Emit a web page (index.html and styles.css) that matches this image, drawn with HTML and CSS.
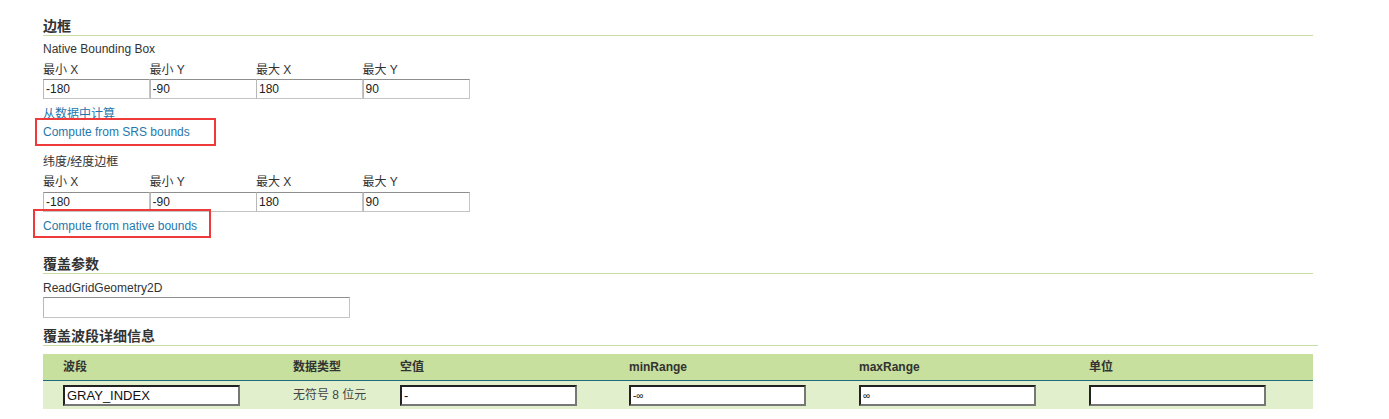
FILE: index.html
```html
<!DOCTYPE html>
<html lang="zh">
<head>
<meta charset="utf-8">
<title>边框</title>
<link rel="stylesheet" href="styles.css">
</head>
<body>
<div class="page">
  <h3 class="section section-first">边框</h3>
  <div class="sub sub-native">Native Bounding Box</div>
  <div class="bbox">
    <span class="bbox-label">最小 X</span>
    <span class="bbox-label">最小 Y</span>
    <span class="bbox-label">最大 X</span>
    <span class="bbox-label">最大 Y</span>
    <input class="bbox-input" type="text" value="-180">
    <input class="bbox-input" type="text" value="-90">
    <input class="bbox-input" type="text" value="180">
    <input class="bbox-input" type="text" value="90">
  </div>
  <div class="link-row link-row-first"><a class="link" href="#">从数据中计算</a></div>
  <div class="link-row link-row-second"><a class="link mark mark-srs" href="#">Compute from SRS bounds</a></div>

  <div class="sub sub-latlon">纬度/经度边框</div>
  <div class="bbox bbox-latlon">
    <span class="bbox-label">最小 X</span>
    <span class="bbox-label">最小 Y</span>
    <span class="bbox-label">最大 X</span>
    <span class="bbox-label">最大 Y</span>
    <input class="bbox-input" type="text" value="-180">
    <input class="bbox-input" type="text" value="-90">
    <input class="bbox-input" type="text" value="180">
    <input class="bbox-input" type="text" value="90">
  </div>
  <div class="link-row link-row-native"><a class="link mark mark-native" href="#">Compute from native bounds</a></div>

  <h3 class="section section-params">覆盖参数</h3>
  <div class="sub sub-grid">ReadGridGeometry2D</div>
  <input class="param-input" type="text" value="">

  <h3 class="section section-bands">覆盖波段详细信息</h3>
  <table class="bands">
    <colgroup>
      <col class="c-band"><col class="c-type"><col class="c-null"><col class="c-min"><col class="c-max"><col class="c-unit">
    </colgroup>
    <thead>
      <tr><th>波段</th><th>数据类型</th><th>空值</th><th>minRange</th><th>maxRange</th><th>单位</th></tr>
    </thead>
    <tbody>
      <tr>
        <td><input class="cell-input" type="text" value="GRAY_INDEX"></td>
        <td class="type">无符号 8 位元</td>
        <td><input class="cell-input" type="text" value="-"></td>
        <td><input class="cell-input cell-small" type="text" value="-∞"></td>
        <td><input class="cell-input cell-small" type="text" value="∞"></td>
        <td><input class="cell-input" type="text" value=""></td>
      </tr>
    </tbody>
  </table>
</div>
</body>
</html>
```

FILE: styles.css
```css
html, body {
  margin: 0;
  padding: 0;
  background: #ffffff;
}

body {
  font-family: "Liberation Sans", "Noto Sans CJK SC", sans-serif;
  font-size: 12px;
  line-height: 16px;
  color: #333333;
}

.page {
  padding-left: 43px;
  width: 1270px;
}

.section {
  margin: 0;
  font-size: 14px;
  font-weight: bold;
  line-height: 18px;
  color: #333333;
  border-bottom: 1px solid #c6dea2;
}

.section-first { padding-top: 17px; }
.section-params { margin-top: 21px; }
.section-bands { margin-top: 9px; width: 1275px; }

.sub { line-height: 16px; }
.sub-native { margin-top: 5px; }
.sub-latlon { margin-top: 14px; }
.sub-grid { margin-top: 6px; }

.bbox {
  display: grid;
  grid-template-columns: repeat(4, 106.5px);
  margin-top: 5px;
}

.bbox-latlon { margin-top: 4px; }

.bbox-label {
  line-height: 16px;
  margin-bottom: 1px;
}

.bbox-latlon .bbox-label { margin-bottom: 2px; }

.bbox-input {
  box-sizing: border-box;
  width: 107px;
  height: 20px;
  margin: 0;
  padding: 0 2px;
  font-family: "Liberation Sans", sans-serif;
  font-size: 12px;
  color: #222222;
  background: #ffffff;
  border: 1px solid #c4c4c4;
  border-top-color: #8e8e8e;
  border-left-color: #b8b8b8;
  border-radius: 0;
  outline: none;
}

.link-row { line-height: 16px; }
.link-row-first { margin-top: 7px; }
.link-row-second { margin-top: 2px; }
.link-row-native { margin-top: 6px; }

.link {
  color: #1f78ad;
  text-decoration: none;
}

.mark {
  position: relative;
  display: inline-block;
}

.mark::after {
  content: "";
  position: absolute;
  border: 2px solid #ee3a3a;
}

.mark-srs::after {
  left: -8px;
  right: -26px;
  top: -6px;
  bottom: -6px;
}

.mark-native::after {
  left: -10px;
  right: -14px;
  top: -9px;
  bottom: -4px;
}

.param-input {
  display: block;
  box-sizing: border-box;
  width: 307px;
  height: 21px;
  margin: 1px 0 0 0;
  padding: 0 2px;
  background: #ffffff;
  border: 1px solid #c4c4c4;
  border-top-color: #8e8e8e;
  border-left-color: #b8b8b8;
  border-radius: 0;
  outline: none;
}

.bands {
  margin-top: 8px;
  width: 1270px;
  border-collapse: collapse;
  table-layout: fixed;
}

.c-band { width: 230px; }
.c-type { width: 107px; }
.c-null { width: 229px; }
.c-min { width: 230px; }
.c-max { width: 230px; }
.c-unit { width: auto; }

.bands th {
  height: 26px;
  padding: 0 0 0 20px;
  background: #c7e09d;
  border-bottom: 1px solid #1d6b7c;
  text-align: left;
  font-weight: bold;
  font-size: 12px;
  color: #333333;
  vertical-align: middle;
}

.bands td {
  height: 28px;
  padding: 0 0 0 20px;
  background: #e2efcd;
  vertical-align: middle;
}

.bands .type {
  color: #444444;
}

.cell-input {
  display: block;
  box-sizing: border-box;
  width: 177px;
  height: 21px;
  margin: 0;
  padding: 0 2px;
  font-family: "Liberation Sans", sans-serif;
  font-size: 13px;
  color: #111111;
  background: #ffffff;
  border: 2px solid;
  border-color: #222222 #777777 #777777 #222222;
  border-radius: 0;
  outline: none;
}

.cell-small {
  font-size: 10px;
}
```
